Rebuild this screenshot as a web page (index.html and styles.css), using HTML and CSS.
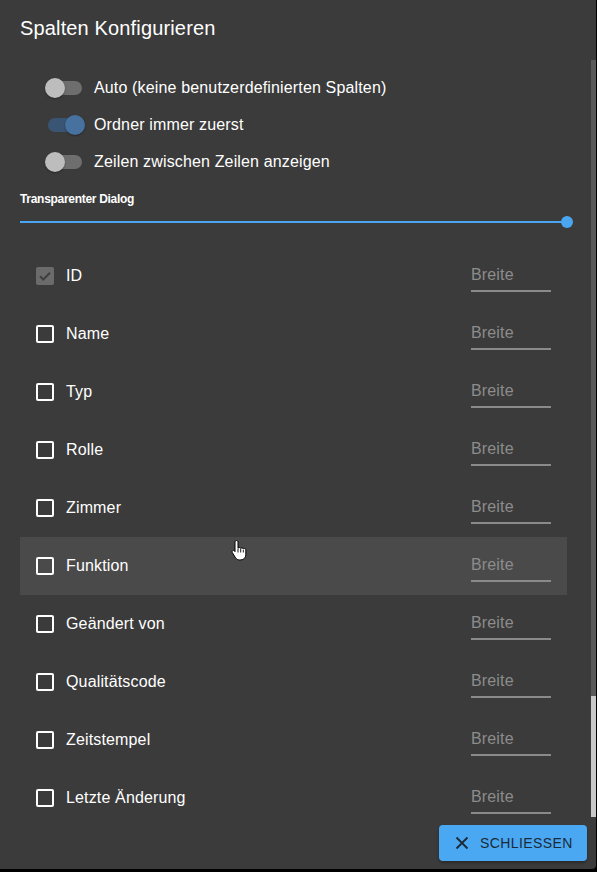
FILE: index.html
```html
<!DOCTYPE html>
<html lang="de">
<head>
<meta charset="utf-8">
<title>Spalten Konfigurieren</title>
<link rel="stylesheet" href="styles.css">
</head>
<body>
<div class="dialog">
  <div class="dialog-title">Spalten Konfigurieren</div>
  <div class="dialog-content">
    <div class="content-inner">
      <div class="switch-row">
        <span class="switch"><span class="track"></span><span class="thumb"></span></span>
        <span class="switch-label">Auto (keine benutzerdefinierten Spalten)</span>
      </div>
      <div class="switch-row">
        <span class="switch on"><span class="track"></span><span class="thumb"></span></span>
        <span class="switch-label">Ordner immer zuerst</span>
      </div>
      <div class="switch-row">
        <span class="switch"><span class="track"></span><span class="thumb"></span></span>
        <span class="switch-label">Zeilen zwischen Zeilen anzeigen</span>
      </div>
      <div class="slider-label">Transparenter Dialog</div>
      <div class="slider"><span class="slider-rail"></span><span class="slider-thumb"></span></div>

      <div class="col-list">
        <div class="col-row"><span class="cb checked-disabled"><svg viewBox="0 0 18 18" width="18" height="18"><path d="M4 9.2l3.3 3.3L14 5.8" fill="none" stroke="#3f3f3f" stroke-width="2"/></svg></span><span class="col-name">ID</span><span class="width-input">Breite</span></div>
        <div class="col-row"><span class="cb"></span><span class="col-name">Name</span><span class="width-input">Breite</span></div>
        <div class="col-row"><span class="cb"></span><span class="col-name">Typ</span><span class="width-input">Breite</span></div>
        <div class="col-row"><span class="cb"></span><span class="col-name">Rolle</span><span class="width-input">Breite</span></div>
        <div class="col-row"><span class="cb"></span><span class="col-name">Zimmer</span><span class="width-input">Breite</span></div>
        <div class="col-row hover"><span class="cb"></span><span class="col-name">Funktion</span><span class="width-input">Breite</span>
          <svg class="cursor" width="16" height="22" viewBox="0 0 16 22"><path d="M5.5 1.5c.8 0 1.5.7 1.5 1.5v6.2c.3-.5.8-.7 1.3-.7.7 0 1.2.4 1.4 1 .3-.4.7-.6 1.2-.6.7 0 1.2.4 1.4 1 .3-.3.6-.4 1-.4.9 0 1.5.7 1.5 1.6v4.6c0 2.9-2 5.2-5 5.2H8.4c-1.6 0-2.9-.7-3.8-2L1.3 13.6c-.4-.7-.2-1.5.4-1.9.6-.4 1.4-.3 1.9.3L4 12.6V3c0-.8.7-1.5 1.5-1.5z" fill="#fff" stroke="#000" stroke-width="1"/><path d="M7 9.5v4M9.7 10v3.5M12.3 10.8v2.7" stroke="#000" stroke-width="0.9"/></svg>
        </div>
        <div class="col-row"><span class="cb"></span><span class="col-name">Geändert von</span><span class="width-input">Breite</span></div>
        <div class="col-row"><span class="cb"></span><span class="col-name">Qualitätscode</span><span class="width-input">Breite</span></div>
        <div class="col-row"><span class="cb"></span><span class="col-name">Zeitstempel</span><span class="width-input">Breite</span></div>
        <div class="col-row"><span class="cb"></span><span class="col-name">Letzte Änderung</span><span class="width-input">Breite</span></div>
      </div>
    </div>
    <div class="scrollbar"><div class="scroll-thumb"></div></div>
  </div>
  <div class="dialog-actions">
    <button class="btn-close">
      <svg width="14" height="14" viewBox="0 0 14 14"><path d="M1.5 1.5l11 11M12.5 1.5l-11 11" stroke="#1c2a38" stroke-width="1.8"/></svg>
      <span>SCHLIESSEN</span>
    </button>
  </div>
</div>
</body>
</html>
```
FILE: styles.css
```css
html, body {
  margin: 0;
  padding: 0;
  background: #000;
}
body {
  width: 597px;
  height: 872px;
  font-family: "Liberation Sans", Arial, sans-serif;
  color: #fff;
}
.dialog {
  width: 596px;
  height: 869px;
  background: #3b3b3b;
  border-radius: 0 0 4px 0;
  display: flex;
  flex-direction: column;
  overflow: hidden;
}
.dialog-title {
  height: 60px;
  box-sizing: border-box;
  padding: 13px 20px 0;
  font-size: 20px;
  line-height: 30px;
  letter-spacing: 0.15px;
  color: #fff;
}
.dialog-content {
  flex: 1;
  display: flex;
  overflow: hidden;
  min-height: 0;
}
.content-inner {
  width: 547px;
  padding: 9px 0 0 20px;
}
.scrollbar {
  margin-left: auto;
  width: 5px;
  background: #5a5a5a;
  display: flex;
  flex-direction: column;
  justify-content: flex-end;
}
.scroll-thumb {
  height: 121px;
  background: #c9c9c9;
}
.switch-row {
  display: flex;
  align-items: center;
  height: 37px;
  margin-left: 16px;
}
.switch {
  position: relative;
  width: 58px;
  height: 37px;
  flex: none;
}
.switch .track {
  position: absolute;
  left: 12px;
  top: 12px;
  width: 34px;
  height: 14px;
  border-radius: 7px;
  background: #6e6e6e;
}
.switch .thumb {
  position: absolute;
  left: 9px;
  top: 9px;
  width: 20px;
  height: 20px;
  border-radius: 50%;
  background: #bdbdbd;
  box-shadow: 0 1px 2px rgba(0,0,0,0.35);
}
.switch.on .track {
  background: #3a5573;
}
.switch.on .thumb {
  left: 29px;
  background: #47719f;
}
.switch-label {
  font-size: 16px;
  line-height: 20px;
  letter-spacing: 0.15px;
  color: #fff;
}
.slider-label {
  margin-top: 11px;
  font-size: 12px;
  font-weight: bold;
  line-height: 16px;
  letter-spacing: -0.3px;
  color: #fff;
}
.slider {
  position: relative;
  height: 30px;
}
.slider-rail {
  position: absolute;
  left: 0;
  right: 0;
  top: 14px;
  height: 2px;
  background: #4aa6f0;
}
.slider-thumb {
  position: absolute;
  right: -6px;
  top: 9px;
  width: 12px;
  height: 12px;
  border-radius: 50%;
  background: #4aa6f0;
}
.col-list {
  margin-top: 10px;
}
.col-row {
  position: relative;
  display: flex;
  align-items: center;
  height: 58px;
  padding: 0 16px;
}
.col-row.hover {
  background: #4a4a4a;
}
.cb {
  width: 18px;
  height: 18px;
  box-sizing: border-box;
  border: 2px solid #fff;
  border-radius: 2px;
  flex: none;
}
.cb.checked-disabled {
  border: none;
  background: #6b6b6b;
  display: flex;
}
.col-name {
  margin-left: 12px;
  font-size: 16px;
  letter-spacing: 0.15px;
  color: #fff;
}
.width-input {
  margin-left: auto;
  width: 80px;
  box-sizing: border-box;
  margin-top: 4px;
  padding: 0 0 4px;
  border-bottom: 2px solid #8a8a8a;
  font-size: 16px;
  line-height: 22px;
  letter-spacing: 0.15px;
  color: #8c8c8c;
}
.cursor {
  position: absolute;
  left: 211px;
  top: 2px;
}
.dialog-actions {
  height: 52px;
  box-sizing: border-box;
  padding: 8px 9px 8px 0;
  display: flex;
  justify-content: flex-end;
}
.btn-close {
  width: 148px;
  height: 36px;
  border: none;
  border-radius: 4px;
  background: #4aa8f2;
  box-shadow: 0 2px 3px rgba(0,0,0,0.3);
  display: flex;
  align-items: center;
  padding: 0 0 0 16px;
  font-family: "Liberation Sans", Arial, sans-serif;
  font-size: 14px;
  letter-spacing: 0.4px;
  color: #1c2a38;
}
.btn-close span {
  margin-left: 11px;
}
```
